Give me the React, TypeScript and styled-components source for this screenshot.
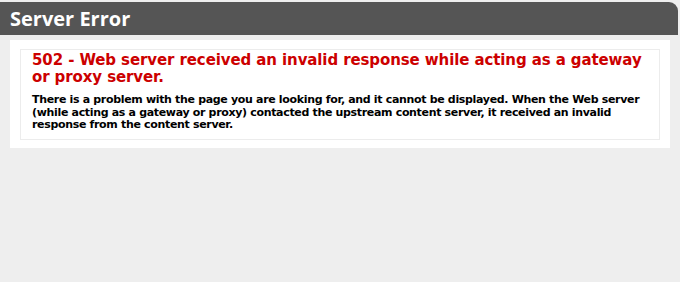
import React from 'react';
import styled, { createGlobalStyle } from 'styled-components';

const GlobalStyle = createGlobalStyle`
  html, body {
    margin: 0;
    padding: 0;
    background: #ffffff;
  }
  body {
    font-family: "DejaVu Sans", Verdana, sans-serif;
  }
`;

const Page = styled.div`
  width: 680px;
  height: 282px;
  background: #eeeeee;
  overflow: hidden;
  display: flex;
  flex-direction: column;
`;

const Header = styled.div`
  margin: 2px 2px 0 0;
  height: 33px;
  padding-left: 10px;
  display: flex;
  align-items: center;
  background: #555555;
  border-top-right-radius: 9px;
`;

const Title = styled.h1`
  margin: 0;
  font-family: "Open Sans", "Trebuchet MS", sans-serif;
  font-size: 20px;
  font-weight: bold;
  color: #ffffff;
`;

const Content = styled.div`
  margin: 5px 0 0 10px;
`;

const Container = styled.div`
  width: 640px;
  background: #ffffff;
  padding: 9px 10px 8px 10px;
`;

const Fieldset = styled.div`
  border: 1px solid #ececec;
  padding: 0 10px 7px 11px;
`;

const Heading = styled.h2`
  margin: 0;
  padding-top: 2px;
  font-size: 15px;
  line-height: 17px;
  font-weight: bold;
  letter-spacing: -0.1px;
  color: #cc0000;
`;

const Message = styled.h3`
  margin: 8px 0 0 0;
  font-size: 11px;
  line-height: 12.5px;
  font-weight: bold;
  letter-spacing: -0.33px;
  color: #000000;
`;

export default function App() {
  return (
    <>
      <GlobalStyle />
      <Page>
        <Header>
          <Title>Server Error</Title>
        </Header>
        <Content>
          <Container>
            <Fieldset>
              <Heading>
                502 - Web server received an invalid response while acting as a gateway or proxy server.
              </Heading>
              <Message>
                There is a problem with the page you are looking for, and it cannot be displayed. When the Web server
                (while acting as a gateway or proxy) contacted the upstream content server, it received an invalid
                response from the content server.
              </Message>
            </Fieldset>
          </Container>
        </Content>
      </Page>
    </>
  );
}
